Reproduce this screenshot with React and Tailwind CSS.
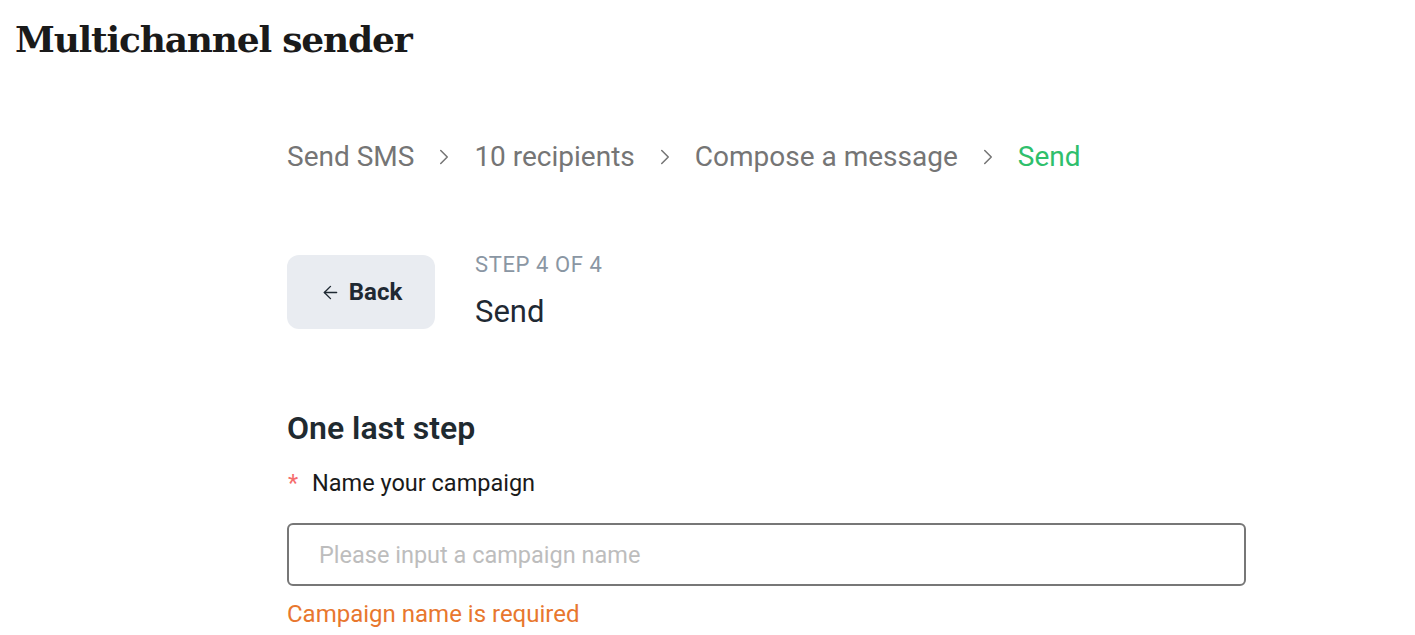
import { ChevronRight, ArrowLeft } from 'lucide-react';

const crumbs = ['Send SMS', '10 recipients', 'Compose a message'];

const App = () => {
    return (
        <div className="min-h-screen bg-white font-['Roboto',sans-serif]">
            <h1 className="px-[15px] pt-[15px] text-[36px] leading-[48px] font-bold text-[#1a1a1a] tracking-[-1.2px] font-['DejaVu_Serif',serif]">
                Multichannel sender
            </h1>

            <div className="pl-[287px] w-[1246px]">
                {/* Breadcrumb */}
                <nav className="mt-[77px] flex items-center text-[28px] leading-[34px] text-[#757575]">
                    {crumbs.map((c) => (
                        <span key={c} className="flex items-center">
                            <span>{c}</span>
                            <ChevronRight size={26} strokeWidth={1.4} className="mx-[17px] text-[#757575]" />
                        </span>
                    ))}
                    <span className="text-[#2fbf6c]">Send</span>
                </nav>

                {/* Step header */}
                <div className="mt-[81px] flex items-start gap-[40px]">
                    <button className="w-[148px] h-[74px] bg-[#e9ecf1] rounded-[12px] flex items-center justify-center gap-[8px] text-[24px] font-bold text-[#1f2933]">
                        <ArrowLeft size={21} strokeWidth={1.6} />
                        Back
                    </button>
                    <div>
                        <p className="text-[22px] leading-[26px] tracking-[0.6px] text-[#8a96a3] mt-[-3px]">STEP 4 OF 4</p>
                        <p className="text-[31px] leading-[38px] text-[#1f2933] mt-[15px]">Send</p>
                    </div>
                </div>

                {/* Form */}
                <h2 className="mt-[78px] text-[32px] leading-[38px] font-semibold text-[#1f2a30]">One last step</h2>
                <label className="mt-[21px] flex items-center text-[23.5px] leading-[30px] text-[#1a1a1a]">
                    <span className="text-[#f56c6c] w-[25px] pl-[1px]">*</span>
                    Name your campaign
                </label>
                <input
                    autoFocus
                    className="mt-[25px] w-full h-[63px] border-2 border-[#777777] rounded-[6px] px-[30px] text-[23.5px] text-[#1a1a1a] caret-black placeholder:text-[#bdbdbd] outline-none"
                    placeholder="Please input a campaign name"
                />
                <p className="mt-[13px] text-[24px] leading-[30px] text-[#e8772e]">Campaign name is required</p>
            </div>
        </div>
    );
};

export default App;
